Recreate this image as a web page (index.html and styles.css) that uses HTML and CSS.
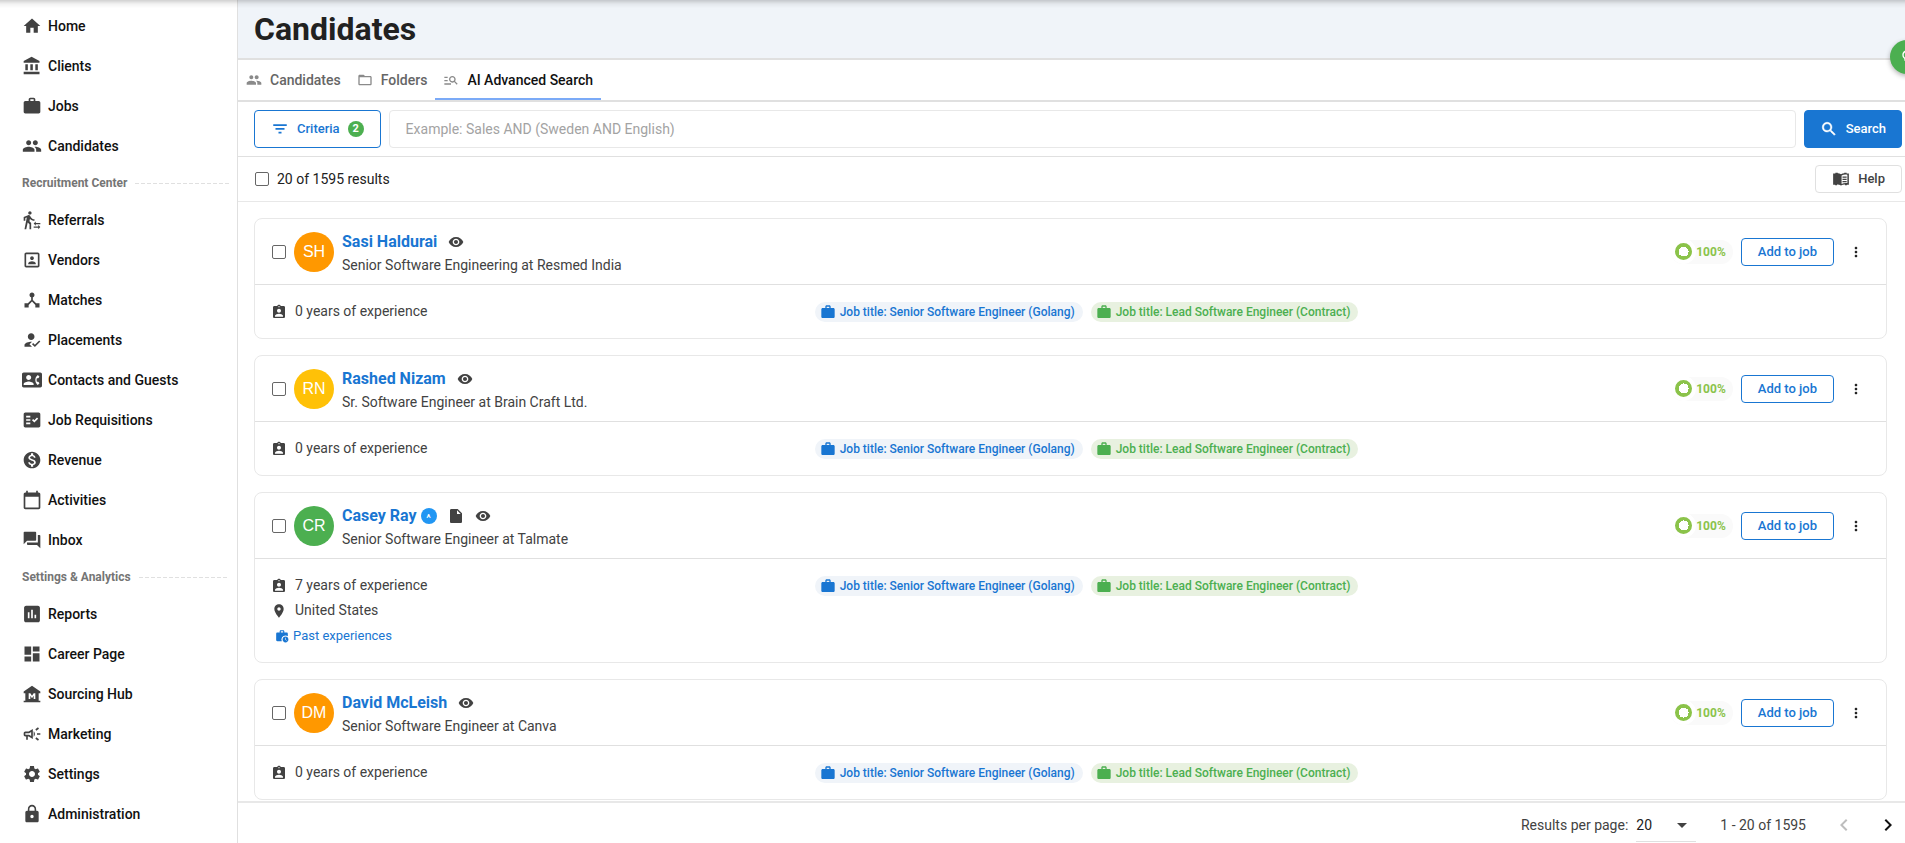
FILE: index.html
```
<!DOCTYPE html>
<html lang="en">
<head>
<meta charset="utf-8">
<title>Candidates</title>
<link rel="stylesheet" href="styles.css">
</head>
<body>
<svg class="sprite" aria-hidden="true">
  <symbol id="i-home" viewBox="0 0 24 24"><path d="M10 20v-6h4v6h5v-8h3L12 3 2 12h3v8z"/></symbol>
  <symbol id="i-bank" viewBox="0 0 24 24"><path d="M4 10v7h3v-7H4zm6 0v7h3v-7h-3zM2 22h19v-3H2v3zm14-12v7h3v-7h-3zm-4.500-9L2 6v2h19V6l-9.500-5z"/></symbol>
  <symbol id="i-work" viewBox="0 0 24 24"><path d="M20 6h-4V4c0-1.110-.890-2-2-2h-4c-1.110 0-2 .890-2 2v2H4c-1.110 0-1.990.890-1.990 2L2 19c0 1.110.890 2 2 2h16c1.110 0 2-.890 2-2V8c0-1.110-.890-2-2-2zm-6 0h-4V4h4v2z"/></symbol>
  <symbol id="i-people" viewBox="0 0 24 24"><path d="M16 11c1.660 0 2.990-1.340 2.990-3S17.660 5 16 5s-3 1.340-3 3 1.340 3 3 3zm-8 0c1.660 0 2.990-1.340 2.990-3S9.660 5 8 5 5 6.340 5 8s1.340 3 3 3zm0 2c-2.330 0-7 1.170-7 3.500V19h14v-2.500c0-2.330-4.670-3.500-7-3.500zm8 0c-.290 0-.620.020-.970.050 1.160.840 1.970 1.970 1.970 3.450V19h6v-2.500c0-2.330-4.670-3.500-7-3.500z"/></symbol>
  <symbol id="i-referral" viewBox="0 0 24 24"><path d="M16.490 15.500v-1.750L14 16.250l2.490 2.500V17H22v-1.500zM19.510 19.750H14v1.500h5.510V23L22 20.500 19.510 18zM9.500 5.500c1.100 0 2-.900 2-2s-.900-2-2-2-2 .900-2 2 .900 2 2 2zM5.750 8.900L3 23h2.100l1.750-8L9 17v6h2v-7.550L8.950 13.400l.600-3C10.850 12 12.800 13 15 13v-2c-1.850 0-3.450-1-4.350-2.450l-.950-1.600C9.350 6.350 8.700 6 8 6c-.250 0-.500.050-.750.150L2 8.300V13h2V9.650l1.750-.750"/></symbol>
  <symbol id="i-vendor" viewBox="0 0 24 24"><path d="M19 3H5c-1.110 0-2 .900-2 2v14c0 1.100.890 2 2 2h14c1.100 0 2-.900 2-2V5c0-1.100-.900-2-2-2zm0 16H5V5h14v14zM12 12c1.250 0 2.250-1 2.250-2.250S13.250 7.500 12 7.500s-2.250 1-2.250 2.250S10.750 12 12 12zm4.500 3.900c0-1.500-3-2.400-4.500-2.400s-4.500.900-4.500 2.400V17h9z"/></symbol>
  <symbol id="i-hub" viewBox="0 0 24 24"><path d="M17 16l-4-4V8.820C14.160 8.400 15 7.300 15 6c0-1.660-1.340-3-3-3S9 4.340 9 6c0 1.300.840 2.400 2 2.820V12l-4 4H3v5h5v-3.050l4-4.200 4 4.200V21h5v-5h-4z"/></symbol>
  <symbol id="i-placed" viewBox="0 0 24 24"><path d="M9 17l3-2.940c-.390-.040-.680-.060-1-.060-2.670 0-8 1.340-8 4v2h9l-3-3zm2-5c2.210 0 4-1.790 4-4s-1.790-4-4-4-4 1.790-4 4 1.790 4 4 4M15.470 20.500L12 17l1.400-1.410 2.070 2.080 5.130-5.170 1.400 1.410z"/></symbol>
  <symbol id="i-contact" viewBox="0 0 24 24"><path d="M22 3H2C.9 3 0 3.900 0 5v14c0 1.100.9 2 2 2h20c1.100 0 1.990-.9 1.990-2L24 5c0-1.100-.9-2-2-2zM8 6c1.660 0 3 1.340 3 3s-1.340 3-3 3-3-1.340-3-3 1.340-3 3-3zm6 12H2v-1c0-2 4-3.100 6-3.100s6 1.100 6 3.100v1zm3.850-4h1.640L21 16l-1.990 1.990c-1.310-.98-2.280-2.380-2.730-3.990-.18-.64-.28-1.310-.28-2s.1-1.360.28-2c.45-1.620 1.420-3.010 2.730-3.990L21 8l-1.510 2h-1.640c-.22.63-.35 1.300-.35 2s.13 1.370.35 2z"/></symbol>
  <symbol id="i-req" viewBox="0 0 24 24"><path fill-rule="evenodd" d="M20 3H4c-1.100 0-2 .9-2 2v14c0 1.100.9 2 2 2h16c1.100 0 2-.9 2-2V5c0-1.100-.9-2-2-2zM10 17H5v-2h5v2zm0-4H5v-2h5v2zm0-4H5V7h5v2zm4.820 6L12 12.160l1.410-1.410 1.410 1.420L17.990 9l1.420 1.420L14.820 15z"/></symbol>
  <symbol id="i-money" viewBox="0 0 24 24"><path d="M12 2C6.480 2 2 6.480 2 12s4.480 10 10 10 10-4.480 10-10S17.520 2 12 2zm1.410 16.090V20h-2.670v-1.930c-1.710-.36-3.160-1.460-3.270-3.400h1.960c.1 1.050.82 1.870 2.650 1.870 1.960 0 2.400-.98 2.400-1.590 0-.83-.44-1.610-2.670-2.140-2.480-.6-4.180-1.620-4.180-3.670 0-1.720 1.390-2.840 3.110-3.210V4h2.670v1.950c1.860.45 2.790 1.860 2.850 3.390H14.300c-.05-1.110-.64-1.870-2.220-1.870-1.500 0-2.400.68-2.400 1.640 0 .84.65 1.390 2.670 1.910s4.180 1.390 4.180 3.910c-.01 1.830-1.380 2.830-3.120 3.160z"/></symbol>
  <symbol id="i-cal" viewBox="0 0 24 24"><path d="M20 3h-1V1h-2v2H7V1H5v2H4c-1.100 0-2 .9-2 2v16c0 1.100.9 2 2 2h16c1.100 0 2-.9 2-2V5c0-1.100-.9-2-2-2zm0 18H4V8h16v13z"/></symbol>
  <symbol id="i-inbox" viewBox="0 0 24 24"><path d="M21 6h-2v9H6v2c0 .55.45 1 1 1h11l4 4V7c0-.55-.45-1-1-1zm-4 6V3c0-.55-.45-1-1-1H3c-.55 0-1 .45-1 1v14l4-4h10c.55 0 1-.45 1-1z"/></symbol>
  <symbol id="i-chart" viewBox="0 0 24 24"><path d="M19 2H5C3.300 2 2.500 3.300 2.500 4.500v15C2.500 20.700 3.300 22 5 22h14c1.700 0 2.500-1.300 2.500-2.500v-15C21.500 3.300 20.700 2 19 2zM9 17H7v-7h2v7zm4 0h-2V7h2v10zm4 0h-2v-4h2v4z"/></symbol>
  <symbol id="i-dash" viewBox="0 0 24 24"><path d="M3 13h8V3H3v10zm0 8h8v-6H3v6zm10 0h8V11h-8v10zm0-18v6h8V3h-8z"/></symbol>
  <symbol id="i-museum" viewBox="0 0 24 24"><path d="M22 11V9L12 2 2 9v2h2v9H2v2h20v-2h-2v-9h2zm-6 7h-2v-4l-2 3-2-3v4H8v-7h2l2 3 2-3h2v7z"/></symbol>
  <symbol id="i-campaign" viewBox="0 0 24 24"><path d="M18 11v2h4v-2h-4zM16 17.610c.96.710 2.210 1.650 3.200 2.390.4-.53.8-1.070 1.200-1.600-.99-.74-2.240-1.680-3.200-2.400-.4.540-.8 1.080-1.200 1.610zM20.400 5.600c-.4-.53-.8-1.070-1.200-1.600-.99.740-2.240 1.680-3.200 2.400.4.530.8 1.070 1.200 1.600.96-.72 2.210-1.650 3.200-2.400zM4 9c-1.100 0-2 .9-2 2v2c0 1.100.9 2 2 2h1v4h2v-4h1l5 3V6L8 9H4zm5.030 1.710L11 9.530v4.940l-1.970-1.180-.48-.29H4v-2h4.550l.48-.29zM15.500 12c0-1.330-.58-2.530-1.500-3.350v6.690c.92-.81 1.500-2.010 1.500-3.340z"/></symbol>
  <symbol id="i-gear" viewBox="0 0 24 24"><path d="M19.140 12.940c.04-.3.060-.61.060-.94 0-.32-.02-.64-.07-.94l2.030-1.580c.18-.14.230-.41.120-.61l-1.920-3.320c-.12-.22-.37-.29-.59-.22l-2.390.96c-.5-.38-1.030-.7-1.620-.94l-.36-2.540c-.04-.24-.24-.41-.48-.41h-3.840c-.24 0-.43.170-.47.410l-.36 2.540c-.59.240-1.130.570-1.620.940l-2.390-.96c-.22-.08-.47 0-.59.220L2.740 8.870c-.12.210-.08.470.120.610l2.030 1.580c-.05.300-.09.630-.09.940s.02.640.070.940l-2.030 1.580c-.18.140-.23.410-.12.610l1.920 3.320c.12.220.37.290.59.220l2.390-.96c.5.380 1.030.7 1.620.94l.36 2.540c.05.240.24.410.48.410h3.840c.24 0 .44-.17.470-.41l.36-2.540c.59-.24 1.130-.56 1.620-.94l2.390.96c.22.080.47 0 .59-.22l1.920-3.320c.12-.22.070-.47-.12-.61l-2.010-1.580zM12 15.600c-1.980 0-3.600-1.620-3.600-3.600s1.620-3.600 3.600-3.600 3.600 1.620 3.600 3.600-1.620 3.600-3.600 3.600z"/></symbol>
  <symbol id="i-lock" viewBox="0 0 24 24"><path d="M18 8h-1V6c0-2.760-2.240-5-5-5S7 3.240 7 6v2H6c-1.100 0-2 .9-2 2v10c0 1.100.9 2 2 2h12c1.100 0 2-.9 2-2V10c0-1.100-.9-2-2-2zm-6 9c-1.100 0-2-.9-2-2s.9-2 2-2 2 .9 2 2-.9 2-2 2zm3.100-9H8.900V6c0-1.710 1.390-3.100 3.100-3.100 1.710 0 3.100 1.390 3.100 3.100v2z"/></symbol>
  <symbol id="i-folder" viewBox="0 0 24 24"><path d="M20 6h-8l-2-2H4c-1.100 0-1.990.9-1.990 2L2 18c0 1.100.9 2 2 2h16c1.100 0 2-.9 2-2V8c0-1.100-.9-2-2-2zm0 12H4V8h16v10z"/></symbol>
  <symbol id="i-manage" viewBox="0 0 24 24"><path d="M7 9H2V7h5v2zm0 3H2v2h5v-2zm13.590 7l-3.830-3.830c-.8.520-1.740.83-2.760.83-2.760 0-5-2.240-5-5s2.240-5 5-5 5 2.240 5 5c0 1.020-.31 1.960-.83 2.750L22 17.590 20.590 19zM17 11c0-1.650-1.350-3-3-3s-3 1.350-3 3 1.350 3 3 3 3-1.350 3-3zM2 19h10v-2H2v2z"/></symbol>
  <symbol id="i-filter" viewBox="0 0 24 24"><path d="M10 18h4v-2.500h-4V18zM3 5.500V8h18V5.500H3zm3 7.500h12v-2.500H6V13z"/></symbol>
  <symbol id="i-search" viewBox="0 0 24 24"><path d="M15.500 14h-.79l-.28-.27C15.410 12.590 16 11.110 16 9.500 16 5.910 13.090 3 9.500 3S3 5.910 3 9.500 5.910 16 9.500 16c1.610 0 3.090-.59 4.230-1.570l.27.280v.79l5 4.990L20.490 19l-4.990-5zm-6 0C7.010 14 5 11.990 5 9.500S7.010 5 9.500 5 14 7.010 14 9.500 11.990 14 9.500 14z" stroke="currentColor" stroke-width=".6"/></symbol>
  <symbol id="i-reader" viewBox="0 0 24 24"><path fill-rule="evenodd" d="M1.500 4.500h3V3.500h3.200v.8c1.600.1 3 .6 4.300 1.400 1.300-.8 2.700-1.300 4.300-1.400v-.8h3.200v1h3v15h-2.700v.8h-2.500v-.9c-1.900-.1-3.600.3-5.300 1.300-1.700-1-3.400-1.400-5.300-1.300v.9H4.200v-.8H1.500zM12.800 7.200v11.300c2.500-1.200 5-1.500 7.700-1.100V6.400c-2.700-.5-5.200-.2-7.700.8zM14 8.800h5.500v1.500H14zm0 3h5.500v1.500H14zm0 3h5.500v1.500H14z"/></symbol>
  <symbol id="i-eye" viewBox="0 0 24 24"><path d="M12 4.500C7 4.500 2.730 7.610 1 12c1.730 4.390 6 7.500 11 7.500s9.270-3.110 11-7.500c-1.730-4.390-6-7.500-11-7.500zM12 17c-2.760 0-5-2.240-5-5s2.240-5 5-5 5 2.240 5 5-2.240 5-5 5zm0-8c-1.660 0-3 1.340-3 3s1.340 3 3 3 3-1.340 3-3-1.340-3-3-3z"/></symbol>
  <symbol id="i-file" viewBox="0 0 24 24"><path d="M5 1.500c-1.100 0-2 .9-2 2v17c0 1.100.9 2 2 2h14c1.100 0 2-.9 2-2V8l-6.500-6.500H5zM13.500 9V3.500L19 9h-5.500z"/></symbol>
  <symbol id="i-badge" viewBox="0 0 24 24"><path d="M19 3h-4.180C14.400 1.840 13.300 1 12 1c-1.300 0-2.400.84-2.820 2H5c-1.100 0-2 .9-2 2v14c0 1.100.9 2 2 2h14c1.100 0 2-.9 2-2V5c0-1.100-.9-2-2-2zm-7 0c.55 0 1 .45 1 1s-.45 1-1 1-1-.45-1-1 .45-1 1-1zm0 4c1.660 0 3 1.340 3 3s-1.340 3-3 3-3-1.340-3-3 1.340-3 3-3zm6 12H6v-1.400c0-2 4-3.100 6-3.100s6 1.100 6 3.100V19z"/></symbol>
  <symbol id="i-pin" viewBox="0 0 24 24"><path d="M12 2C8.130 2 5 5.130 5 9c0 5.250 7 13 7 13s7-7.750 7-13c0-3.870-3.130-7-7-7zm0 9.500c-1.380 0-2.500-1.120-2.500-2.500s1.120-2.500 2.500-2.500 2.500 1.120 2.500 2.500-1.120 2.500-2.500 2.500z"/></symbol>
  <symbol id="i-history" viewBox="0 0 24 24"><path d="M18 11c1.490 0 2.870.47 4 1.260V8c0-1.110-.89-2-2-2h-4V4c0-1.110-.89-2-2-2h-4c-1.110 0-2 .89-2 2v2H4c-1.110 0-1.990.89-1.990 2L2 19c0 1.110.89 2 2 2h7.680A6.990 6.990 0 0 1 18 11zm-8-7h4v2h-4V4zM18 13c-2.760 0-5 2.240-5 5s2.240 5 5 5 5-2.240 5-5-2.240-5-5-5zm1.650 7.350L17.500 18.200V15h1v2.790l1.850 1.850-.7.710z"/></symbol>
  <symbol id="i-more" viewBox="0 0 24 24"><path d="M12 8c1.100 0 2-.9 2-2s-.9-2-2-2-2 .9-2 2 .9 2 2 2zm0 2c-1.100 0-2 .9-2 2s.9 2 2 2 2-.9 2-2-.9-2-2-2zm0 6c-1.100 0-2 .9-2 2s.9 2 2 2 2-.9 2-2-.9-2-2-2z"/></symbol>
  <symbol id="i-left" viewBox="0 0 24 24"><path d="M15.410 7.410L14 6l-6 6 6 6 1.410-1.410L10.830 12z"/></symbol>
  <symbol id="i-right" viewBox="0 0 24 24"><path d="M10 6L8.590 7.410 13.170 12l-4.580 4.590L10 18l6-6z"/></symbol>
  <symbol id="i-down" viewBox="0 0 24 24"><path d="M7 10l5 5 5-5z"/></symbol>
  <symbol id="i-bulb" viewBox="0 0 24 24"><path d="M9 21c0 .5.400 1 1 1h4c.6 0 1-.5 1-1v-1H9v1zm3-19C8.100 2 5 5.100 5 9c0 2.400 1.200 4.500 3 5.700V17c0 .5.400 1 1 1h6c.6 0 1-.5 1-1v-2.300c1.800-1.300 3-3.400 3-5.700 0-3.900-3.100-7-7-7zm2 11.700V16h-4v-2.300C8.500 12.900 7 11.200 7 9c0-2.800 2.200-5 5-5s5 2.200 5 5c0 2.200-1.500 3.900-3 4.700z"/></symbol>
</svg>

<div class="app">
  <nav class="sidebar" aria-label="Main">
    <a class="nav-item" href="#"><svg class="icon-20"><use href="#i-home"/></svg>Home</a>
    <a class="nav-item" href="#"><svg class="icon-20"><use href="#i-bank"/></svg>Clients</a>
    <a class="nav-item" href="#"><svg class="icon-20"><use href="#i-work"/></svg>Jobs</a>
    <a class="nav-item" href="#"><svg class="icon-20"><use href="#i-people"/></svg>Candidates</a>
    <h2 class="nav-section">Recruitment Center</h2>
    <a class="nav-item" href="#"><svg class="icon-20"><use href="#i-referral"/></svg>Referrals</a>
    <a class="nav-item" href="#"><svg class="icon-20"><use href="#i-vendor"/></svg>Vendors</a>
    <a class="nav-item" href="#"><svg class="icon-20"><use href="#i-hub"/></svg>Matches</a>
    <a class="nav-item" href="#"><svg class="icon-20"><use href="#i-placed"/></svg>Placements</a>
    <a class="nav-item" href="#"><svg class="icon-20"><use href="#i-contact"/></svg>Contacts and Guests</a>
    <a class="nav-item" href="#"><svg class="icon-20"><use href="#i-req"/></svg>Job Requisitions</a>
    <a class="nav-item" href="#"><svg class="icon-20"><use href="#i-money"/></svg>Revenue</a>
    <a class="nav-item" href="#"><svg class="icon-20"><use href="#i-cal"/></svg>Activities</a>
    <a class="nav-item" href="#"><svg class="icon-20"><use href="#i-inbox"/></svg>Inbox</a>
    <h2 class="nav-section">Settings &amp; Analytics</h2>
    <a class="nav-item" href="#"><svg class="icon-20"><use href="#i-chart"/></svg>Reports</a>
    <a class="nav-item" href="#"><svg class="icon-20"><use href="#i-dash"/></svg>Career Page</a>
    <a class="nav-item" href="#"><svg class="icon-20"><use href="#i-museum"/></svg>Sourcing Hub</a>
    <a class="nav-item" href="#"><svg class="icon-20"><use href="#i-campaign"/></svg>Marketing</a>
    <a class="nav-item" href="#"><svg class="icon-20"><use href="#i-gear"/></svg>Settings</a>
    <a class="nav-item" href="#"><svg class="icon-20"><use href="#i-lock"/></svg>Administration</a>
  </nav>

  <main class="main">
    <header class="page-header"><h1 class="page-title">Candidates</h1></header>

    <nav class="tabs" aria-label="Candidate views">
      <a class="tab" href="#"><svg class="icon-16"><use href="#i-people"/></svg>Candidates</a>
      <a class="tab" href="#"><svg class="icon-16"><use href="#i-folder"/></svg>Folders</a>
      <a class="tab tab-active" href="#" aria-current="page"><svg class="icon-16"><use href="#i-manage"/></svg>AI Advanced Search</a>
    </nav>

    <form class="search-row">
      <button class="btn btn-outline btn-tall btn-criteria" type="button"><svg class="icon-18"><use href="#i-filter"/></svg>Criteria<span class="count">2</span></button>
      <input class="query" type="text" aria-label="Search query" placeholder="Example: Sales AND (Sweden AND English)">
      <button class="btn btn-solid btn-tall" type="button"><svg class="icon-18"><use href="#i-search"/></svg>Search</button>
    </form>

    <div class="results-row">
      <label class="select-all"><input class="check" type="checkbox">20 of 1595 results</label>
      <button class="btn btn-plain" type="button"><svg class="icon-18"><use href="#i-reader"/></svg>Help</button>
    </div>

    <div class="list">
      <article class="card">
        <div class="card-head">
          <input class="check" type="checkbox" aria-label="Select Sasi Haldurai">
          <span class="avatar orange">SH</span>
          <div class="who">
            <div class="name-row"><a class="name" href="#">Sasi Haldurai</a><svg class="icon-16 mark"><use href="#i-eye"/></svg></div>
            <div class="role">Senior Software Engineering at Resmed India</div>
          </div>
          <div class="score"><span class="ring"></span>100%</div>
          <button class="btn btn-outline" type="button">Add to job</button>
          <button class="more" type="button" aria-label="More"><svg class="icon-16"><use href="#i-more"/></svg></button>
        </div>
        <div class="card-body">
          <div class="facts">
            <div class="fact"><svg class="icon-16"><use href="#i-badge"/></svg>0 years of experience</div>
          </div>
          <div class="chips">
            <span class="chip chip-blue"><svg class="icon-16"><use href="#i-work"/></svg>Job title: Senior Software Engineer (Golang)</span>
            <span class="chip chip-green"><svg class="icon-16"><use href="#i-work"/></svg>Job title: Lead Software Engineer (Contract)</span>
          </div>
        </div>
      </article>

      <article class="card">
        <div class="card-head">
          <input class="check" type="checkbox" aria-label="Select Rashed Nizam">
          <span class="avatar amber">RN</span>
          <div class="who">
            <div class="name-row"><a class="name" href="#">Rashed Nizam</a><svg class="icon-16 mark"><use href="#i-eye"/></svg></div>
            <div class="role">Sr. Software Engineer at Brain Craft Ltd.</div>
          </div>
          <div class="score"><span class="ring"></span>100%</div>
          <button class="btn btn-outline" type="button">Add to job</button>
          <button class="more" type="button" aria-label="More"><svg class="icon-16"><use href="#i-more"/></svg></button>
        </div>
        <div class="card-body">
          <div class="facts">
            <div class="fact"><svg class="icon-16"><use href="#i-badge"/></svg>0 years of experience</div>
          </div>
          <div class="chips">
            <span class="chip chip-blue"><svg class="icon-16"><use href="#i-work"/></svg>Job title: Senior Software Engineer (Golang)</span>
            <span class="chip chip-green"><svg class="icon-16"><use href="#i-work"/></svg>Job title: Lead Software Engineer (Contract)</span>
          </div>
        </div>
      </article>

      <article class="card">
        <div class="card-head">
          <input class="check" type="checkbox" aria-label="Select Casey Ray">
          <span class="avatar green">CR</span>
          <div class="who">
            <div class="name-row"><a class="name" href="#">Casey Ray</a><span class="tag">A</span><svg class="icon-16 mark"><use href="#i-file"/></svg><svg class="icon-16 mark"><use href="#i-eye"/></svg></div>
            <div class="role">Senior Software Engineer at Talmate</div>
          </div>
          <div class="score"><span class="ring"></span>100%</div>
          <button class="btn btn-outline" type="button">Add to job</button>
          <button class="more" type="button" aria-label="More"><svg class="icon-16"><use href="#i-more"/></svg></button>
        </div>
        <div class="card-body">
          <div class="facts">
            <div class="fact"><svg class="icon-16"><use href="#i-badge"/></svg>7 years of experience</div>
            <div class="fact"><svg class="icon-16"><use href="#i-pin"/></svg>United States</div>
            <a class="past" href="#"><svg class="icon-14"><use href="#i-history"/></svg>Past experiences</a>
          </div>
          <div class="chips">
            <span class="chip chip-blue"><svg class="icon-16"><use href="#i-work"/></svg>Job title: Senior Software Engineer (Golang)</span>
            <span class="chip chip-green"><svg class="icon-16"><use href="#i-work"/></svg>Job title: Lead Software Engineer (Contract)</span>
          </div>
        </div>
      </article>

      <article class="card">
        <div class="card-head">
          <input class="check" type="checkbox" aria-label="Select David McLeish">
          <span class="avatar orange">DM</span>
          <div class="who">
            <div class="name-row"><a class="name" href="#">David McLeish</a><svg class="icon-16 mark"><use href="#i-eye"/></svg></div>
            <div class="role">Senior Software Engineer at Canva</div>
          </div>
          <div class="score"><span class="ring"></span>100%</div>
          <button class="btn btn-outline" type="button">Add to job</button>
          <button class="more" type="button" aria-label="More"><svg class="icon-16"><use href="#i-more"/></svg></button>
        </div>
        <div class="card-body">
          <div class="facts">
            <div class="fact"><svg class="icon-16"><use href="#i-badge"/></svg>0 years of experience</div>
          </div>
          <div class="chips">
            <span class="chip chip-blue"><svg class="icon-16"><use href="#i-work"/></svg>Job title: Senior Software Engineer (Golang)</span>
            <span class="chip chip-green"><svg class="icon-16"><use href="#i-work"/></svg>Job title: Lead Software Engineer (Contract)</span>
          </div>
        </div>
      </article>
    </div>

    <footer class="pager">
      <label for="page-size">Results per page:</label>
      <span class="size"><select id="page-size"><option>20</option></select><svg class="icon-24 size-arrow"><use href="#i-down"/></svg></span>
      <span class="range">1 - 20 of 1595</span>
      <button class="page-btn" type="button" aria-label="Previous page" disabled><svg class="icon-24"><use href="#i-left"/></svg></button>
      <button class="page-btn" type="button" aria-label="Next page"><svg class="icon-24"><use href="#i-right"/></svg></button>
    </footer>
  </main>
</div>
<div class="top-shadow"></div>
<button class="fab" type="button" aria-label="Tips"><svg class="icon-16"><use href="#i-bulb"/></svg></button>
</body>
</html>
```

FILE: styles.css
```
* { box-sizing: border-box; }
body {
  margin: 0;
  overflow: hidden;
  background: #fff;
  color: #212121;
  font: 14px/24px Roboto, "Liberation Sans", sans-serif;
}
a { color: inherit; text-decoration: none; }
button, input, select { font: inherit; color: inherit; margin: 0; }
button { cursor: pointer; }
svg { fill: currentColor; flex: none; display: block; }
.sprite { display: none; }
.icon-14 { width: 14px; height: 14px; }
.icon-16 { width: 16px; height: 16px; }
.icon-18 { width: 18px; height: 18px; }
.icon-20 { width: 20px; height: 20px; }
.icon-24 { width: 24px; height: 24px; }

.app { display: flex; height: 100vh; }

/* Sidebar */
.sidebar {
  flex: none;
  width: 238px;
  padding-top: 6px;
  border-right: 1px solid #e0e0e0;
  overflow: hidden;
}
.nav-item {
  display: flex;
  align-items: center;
  gap: 6px;
  height: 40px;
  padding-left: 22px;
  color: #111;
  font-weight: 500;
}
.nav-item svg { color: #424242; }
.nav-section {
  display: flex;
  align-items: center;
  gap: 8px;
  height: 34px;
  margin: 0;
  padding: 0 8px 0 22px;
  color: #757575;
  font-size: 12px;
  font-weight: 700;
}
.nav-section::after {
  content: "";
  flex: 1;
  height: 1px;
  background: repeating-linear-gradient(90deg, #e0e0e0 0 4px, transparent 4px 6px);
}

/* Main column */
.main { flex: 1; min-width: 0; display: flex; flex-direction: column; }
.page-header {
  height: 60px;
  padding: 9px 16px;
  background: #f0f4f9;
  border-bottom: 2px solid #e0e0e0;
}
.page-title { margin: 0; font-size: 32px; line-height: 40px; font-weight: 700; }

.tabs { display: flex; height: 42px; border-bottom: 2px solid #e0e0e0; }
.tab {
  display: flex;
  align-items: center;
  gap: 8px;
  padding: 0 8px;
  color: #666;
  font-weight: 500;
}
.tab svg { color: #8a8a8a; }
.tab-active { color: #111; box-shadow: inset 0 -2px #7baaf7; }

.search-row {
  display: flex;
  gap: 8px;
  padding: 8px 3px 8px 16px;
  border-bottom: 1px solid #e0e0e0;
}
.btn {
  display: inline-flex;
  align-items: center;
  justify-content: center;
  height: 28px;
  padding: 0 16px;
  border: 1px solid #e0e0e0;
  border-radius: 4px;
  background: #fff;
  font-size: 13px;
  font-weight: 500;
  white-space: nowrap;
}
.btn svg { margin-right: 8px; }
.btn-tall { height: 38px; }
.btn-outline { border-color: #1976d2; color: #1976d2; }
.btn-solid { padding: 0 15px; background: #1976d2; border-color: #1976d2; color: #fff; }
.btn-plain { color: #424242; }
.count {
  width: 16px;
  height: 16px;
  margin-left: 8px;
  border-radius: 50%;
  background: #4caf50;
  color: #fff;
  font-size: 11px;
  line-height: 16px;
  font-weight: 700;
}
.query {
  flex: 1;
  min-width: 0;
  height: 38px;
  padding: 0 16px;
  border: 1px solid #e8e8e8;
  border-radius: 4px;
  outline: 0;
}
.query::placeholder { color: #a3a3a3; opacity: 1; }

.results-row {
  display: flex;
  align-items: center;
  justify-content: space-between;
  height: 45px;
  padding: 0 3px 0 17px;
  border-bottom: 1px solid #e8e8e8;
}
.select-all { display: flex; align-items: center; gap: 8px; }
.check {
  appearance: none;
  flex: none;
  width: 14px;
  height: 14px;
  border: 1px solid #666;
  border-radius: 2px;
  background: #fff;
}

/* Candidate cards */
.list {
  flex: 1;
  min-height: 0;
  display: flex;
  flex-direction: column;
  gap: 16px;
  padding: 16px 18px 0 16px;
  overflow-y: auto;
  scrollbar-width: none;
}
.card { flex: none; border: 1px solid #e8e8e8; border-radius: 8px; }
.card-head {
  display: flex;
  align-items: center;
  gap: 8px;
  height: 66px;
  padding: 0 16px 0 17px;
  border-bottom: 1px solid #e0e0e0;
}
.avatar {
  flex: none;
  width: 40px;
  height: 40px;
  border-radius: 50%;
  color: #fff;
  font-family: "Liberation Sans", Arial, sans-serif;
  font-size: 16px;
  line-height: 40px;
  text-align: center;
}
.orange { background: #ff9800; }
.amber { background: #ffc107; }
.green { background: #4caf50; }
.who { flex: 1; min-width: 0; padding-top: 3px; }
.name-row { display: flex; align-items: center; }
.name { color: #1976d2; font-size: 16px; font-weight: 700; }
.mark { margin-left: 11px; color: #424242; }
.tag {
  width: 16px;
  height: 16px;
  margin-left: 4px;
  border-radius: 50%;
  background: #2196f3;
  color: #fff;
  font-size: 6px;
  line-height: 16px;
  font-weight: 700;
  text-align: center;
}
.role { color: #424242; line-height: 23px; }
.score {
  display: flex;
  align-items: center;
  height: 24px;
  padding-right: 7px;
  border-radius: 12px;
  background: #fafafa;
  color: #8bc34a;
  font-size: 12px;
  font-weight: 700;
}
.ring {
  width: 25px;
  height: 25px;
  border: 4px solid #fff;
  border-radius: 50%;
  background: radial-gradient(circle, #fff 5px, #8bc34a 5px);
}
.more {
  display: grid;
  place-items: center;
  width: 28px;
  height: 28px;
  padding: 0;
  border: 0;
  background: none;
  color: #212121;
}
.card-body { display: grid; grid-template-columns: 1fr 2fr; padding: 14px 0; }
.facts { padding-left: 16px; color: #424242; line-height: 25px; }
.fact { display: flex; align-items: center; gap: 8px; }
.past {
  display: flex;
  align-items: center;
  gap: 4px;
  padding-left: 4px;
  color: #1976d2;
  font-size: 13px;
}
.chips { display: flex; align-items: flex-start; gap: 8px; padding: 3px 0 0 16px; }
.chip {
  display: flex;
  align-items: center;
  gap: 4px;
  height: 20px;
  padding: 0 8px 0 5px;
  border-radius: 10px;
  font-size: 12px;
  font-weight: 500;
  white-space: nowrap;
}
.chip-blue { background: #f0f4f9; color: #1976d2; }
.chip-green { background: #e8f1e0; color: #4caf50; }

/* Pager */
.pager {
  display: flex;
  align-items: center;
  flex: none;
  height: 42px;
  padding: 4px 5px 0 0;
  border-top: 2px solid #e8e8e8;
  justify-content: flex-end;
  color: #424242;
}
.size { position: relative; width: 60px; margin: 0 24px 0 8px; border-bottom: 1px solid #e0e0e0; }
.size select {
  appearance: none;
  display: block;
  width: 100%;
  height: 32px;
  padding: 0;
  border: 0;
  background: none;
  color: #212121;
}
.size-arrow { position: absolute; right: 2px; top: 4px; pointer-events: none; }
.range { margin-right: 26px; }
.page-btn { display: flex; padding: 0; border: 0; background: none; color: #111; }
.page-btn + .page-btn { margin-left: 20px; }
.page-btn:disabled { color: #bdbdbd; }

/* Overlays */
.top-shadow {
  position: fixed;
  inset: 0 0 auto 0;
  height: 8px;
  background: linear-gradient(rgba(0, 0, 0, .18), rgba(0, 0, 0, .05) 50%, transparent);
  pointer-events: none;
}
.fab {
  position: fixed;
  top: 40px;
  right: -19px;
  display: grid;
  place-items: center;
  width: 34px;
  height: 34px;
  padding: 0;
  border: 0;
  border-radius: 50%;
  background: #4caf50;
  color: #fff;
  box-shadow: 0 2px 5px rgba(0, 0, 0, .3);
}
```
